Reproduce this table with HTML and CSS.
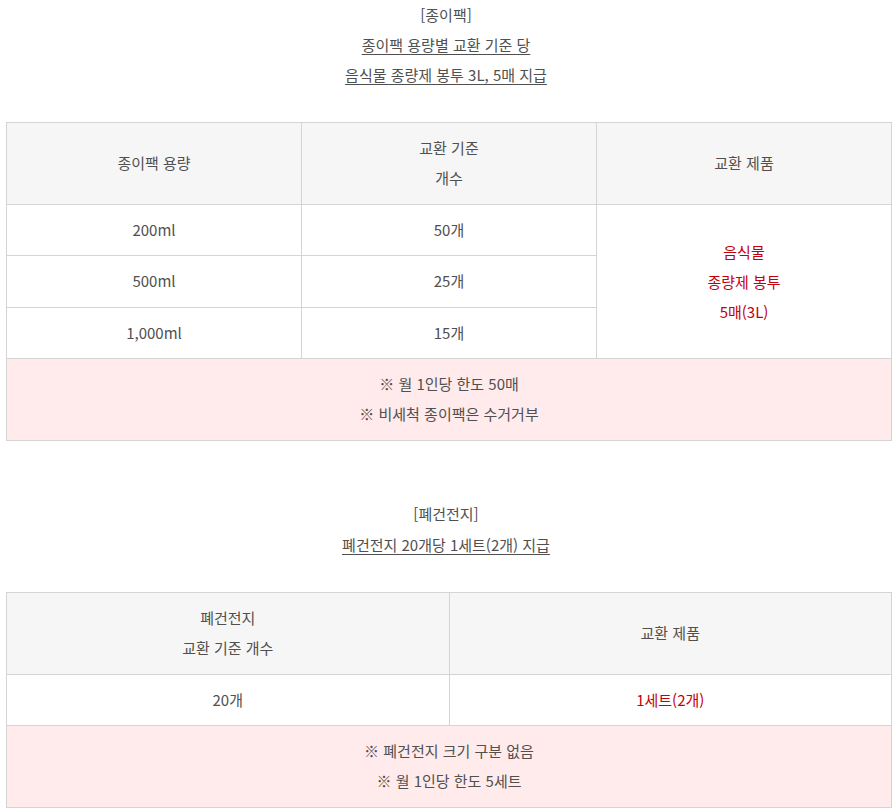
FILE: index.html
```html
<!DOCTYPE html>
<html lang="ko">
<head>
<meta charset="utf-8">
<link rel="stylesheet" href="styles.css">
</head>
<body>
<div class="page">
  <div class="intro">
    <p>[종이팩]</p>
    <p class="u">종이팩 용량별 교환 기준 당</p>
    <p class="u">음식물 종량제 봉투 3L, 5매 지급</p>
  </div>
  <table class="tbl three">
    <tr class="head">
      <th>종이팩 용량</th>
      <th>교환 기준<br>개수</th>
      <th>교환 제품</th>
    </tr>
    <tr>
      <td>200ml</td>
      <td>50개</td>
      <td rowspan="3" class="red">음식물<br>종량제 봉투<br>5매(3L)</td>
    </tr>
    <tr class="tall">
      <td>500ml</td>
      <td>25개</td>
    </tr>
    <tr>
      <td>1,000ml</td>
      <td>15개</td>
    </tr>
    <tr>
      <td colspan="3" class="note">※ 월 1인당 한도 50매<br>※ 비세척 종이팩은 수거거부</td>
    </tr>
  </table>

  <div class="intro second">
    <p>[폐건전지]</p>
    <p class="u">폐건전지 20개당 1세트(2개) 지급</p>
  </div>
  <table class="tbl two">
    <tr class="head">
      <th>폐건전지<br>교환 기준 개수</th>
      <th>교환 제품</th>
    </tr>
    <tr>
      <td>20개</td>
      <td class="red">1세트(2개)</td>
    </tr>
    <tr>
      <td colspan="2" class="note">※ 폐건전지 크기 구분 없음<br>※ 월 1인당 한도 5세트</td>
    </tr>
  </table>
</div>
</body>
</html>
```

FILE: styles.css
```css
html, body {
  margin: 0;
  padding: 0;
  background: #fff;
}
body {
  font-family: "Noto Sans CJK KR", "Noto Sans", sans-serif;
  font-size: 15px;
  line-height: 30px;
  color: #505050;
}
.page {
  padding: 0 0 0 6px;
}
.intro {
  text-align: center;
  margin-left: -6px;
}
.intro p {
  margin: 0;
}
.intro .u {
  text-decoration: underline;
  text-underline-offset: 3px;
}
.second {
  margin-top: 57px;
  line-height: 31px;
}
.tbl {
  width: 886px;
  border-collapse: collapse;
  margin-top: 32px;
  table-layout: fixed;
}
.tbl th, .tbl td {
  border: 1px solid #d4d4d4;
  text-align: center;
  font-weight: normal;
  padding: 10px 8px;
  line-height: 30px;
}
.tbl .tall td {
  padding-bottom: 11px;
}
.tbl .head th {
  background: #f6f6f6;
  padding: 10px 8px 11px;
}
.tbl .red {
  color: #c4000b;
}
.tbl .note {
  background: #ffebeb;
  padding: 10px 8px 11px;
}
```
